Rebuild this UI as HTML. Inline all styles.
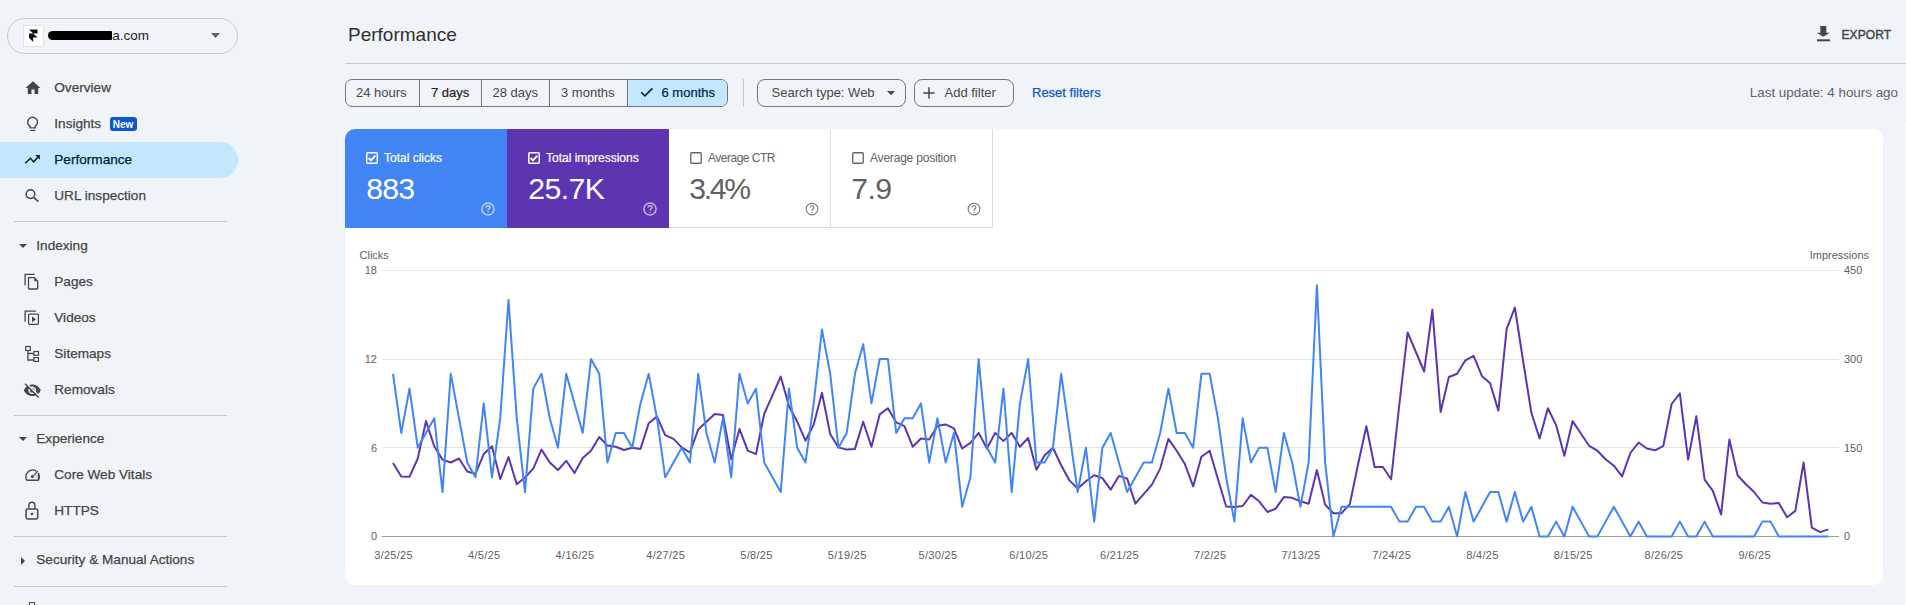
<!DOCTYPE html>
<html><head><meta charset="utf-8"><title>Performance</title>
<style>
html,body{margin:0;padding:0;}
body{width:1906px;height:605px;overflow:hidden;position:relative;background:#f0f4f9;font-family:"Liberation Sans", sans-serif;}
.t{position:absolute;white-space:nowrap;}
</style></head><body>
<div style="position:absolute;left:7.2px;top:18px;width:228.5px;height:34px;border:1px solid #c4c7c5;border-radius:18px;"></div>
<div style="position:absolute;left:23.4px;top:25.4px;width:18.4px;height:19.6px;background:#fff;border:1px solid #e3e3e3;border-radius:1px;"></div>
<svg style="position:absolute;left:28px;top:29px" width="11" height="14" viewBox="0 0 11 14"><path d="M1 0.5H9.5V4.5H5.2L9.5 8.5H5.2V13L1 8.7V4.5H5.2Z" fill="#111"/></svg>
<div style="position:absolute;left:48px;top:31.3px;width:64px;height:8.7px;background:#000;border-radius:4.5px 1px 1px 4.5px;"></div>
<div class="t" style="left:112.3px;top:25.66px;font-size:13.5px;line-height:20px;color:#1f1f1f;">a.com</div>
<svg style="position:absolute;left:210px;top:32px" width="11" height="7" viewBox="0 0 11 7"><path d="M1 1H10L5.5 6Z" fill="#5f6368"/></svg>
<div style="position:absolute;left:0;top:142px;width:238px;height:36px;background:#c2e7ff;border-radius:0 18px 18px 0;"></div>
<div class="t" style="left:54.3px;top:77.66px;font-size:13.6px;line-height:20px;color:#444746;-webkit-text-stroke:0.25px #444746;">Overview</div>
<div class="t" style="left:54.3px;top:113.66px;font-size:13.6px;line-height:20px;color:#444746;-webkit-text-stroke:0.25px #444746;">Insights</div>
<div class="t" style="left:54.3px;top:149.66px;font-size:13.6px;line-height:20px;color:#001d35;-webkit-text-stroke:0.25px #001d35;">Performance</div>
<div class="t" style="left:54.3px;top:185.66px;font-size:13.6px;line-height:20px;color:#444746;-webkit-text-stroke:0.25px #444746;">URL inspection</div>
<div class="t" style="left:54.3px;top:271.66px;font-size:13.6px;line-height:20px;color:#444746;-webkit-text-stroke:0.25px #444746;">Pages</div>
<div class="t" style="left:54.3px;top:307.66px;font-size:13.6px;line-height:20px;color:#444746;-webkit-text-stroke:0.25px #444746;">Videos</div>
<div class="t" style="left:54.3px;top:343.66px;font-size:13.6px;line-height:20px;color:#444746;-webkit-text-stroke:0.25px #444746;">Sitemaps</div>
<div class="t" style="left:54.3px;top:379.66px;font-size:13.6px;line-height:20px;color:#444746;-webkit-text-stroke:0.25px #444746;">Removals</div>
<div class="t" style="left:54.3px;top:464.66px;font-size:13.6px;line-height:20px;color:#444746;-webkit-text-stroke:0.25px #444746;">Core Web Vitals</div>
<div class="t" style="left:54.3px;top:500.66px;font-size:13.6px;line-height:20px;color:#444746;-webkit-text-stroke:0.25px #444746;">HTTPS</div>
<div style="position:absolute;left:110px;top:117px;width:27px;height:14px;background:#0b57d0;border-radius:3px;"></div>
<div class="t" style="left:112.8px;top:114.61px;font-size:10px;line-height:20px;color:#fff;font-weight:bold;">New</div>
<div class="t" style="left:36.3px;top:235.66px;font-size:13.6px;line-height:20px;color:#444746;-webkit-text-stroke:0.25px #444746;">Indexing</div>
<div class="t" style="left:36.3px;top:428.66px;font-size:13.6px;line-height:20px;color:#444746;-webkit-text-stroke:0.25px #444746;">Experience</div>
<div class="t" style="left:36.3px;top:550.46px;font-size:13.6px;line-height:20px;color:#444746;-webkit-text-stroke:0.25px #444746;">Security &amp; Manual Actions</div>
<svg style="position:absolute;left:18px;top:243px" width="10" height="6" viewBox="0 0 10 6"><path d="M1 1H9L5 5Z" fill="#444746"/></svg>
<svg style="position:absolute;left:18px;top:436px" width="10" height="6" viewBox="0 0 10 6"><path d="M1 1H9L5 5Z" fill="#444746"/></svg>
<svg style="position:absolute;left:20px;top:556px" width="6" height="10" viewBox="0 0 6 10"><path d="M1 1V9L5 5Z" fill="#444746"/></svg>
<div style="position:absolute;left:14px;top:221px;width:213px;height:1px;background:#c7c7c7;"></div>
<div style="position:absolute;left:14px;top:415px;width:213px;height:1px;background:#c7c7c7;"></div>
<div style="position:absolute;left:14px;top:536px;width:213px;height:1px;background:#c7c7c7;"></div>
<div style="position:absolute;left:14px;top:586px;width:213px;height:1px;background:#c7c7c7;"></div>
<svg style="position:absolute;left:23.5px;top:78.5px" width="18" height="18" viewBox="0 0 24 24"><path d="M10 20v-6h4v6h5v-8h3L12 3 2 12h3v8z" fill="#444746"/></svg>
<svg style="position:absolute;left:20px;top:112px" width="26" height="24" viewBox="0 0 26 24"><path d="M10.2 15.9V14.4C8.6 13.5 7.7 12 7.7 10.2 7.7 7.5 9.9 5.3 12.6 5.3S17.5 7.5 17.5 10.2C17.5 12 16.6 13.5 15.1 14.4V15.9Z" fill="none" stroke="#444746" stroke-width="1.4"/><path d="M10.2 18.5H15.2" stroke="#444746" stroke-width="1.2"/></svg>
<svg style="position:absolute;left:20px;top:148px" width="26" height="24" viewBox="0 0 26 24"><path d="M5.2 15.3L10.5 10.3 13.5 13.8 19.3 7.9" fill="none" stroke="#1f1f1f" stroke-width="1.5"/><path d="M15.2 7.1H19.9V11.8Z" fill="#1f1f1f"/></svg>
<svg style="position:absolute;left:20px;top:184px" width="26" height="24" viewBox="0 0 26 24"><circle cx="10.5" cy="10.1" r="4.3" fill="none" stroke="#444746" stroke-width="1.5"/><path d="M13.7 13.4L18.4 17.6" stroke="#444746" stroke-width="1.6"/></svg>
<svg style="position:absolute;left:20px;top:270px" width="26" height="24" viewBox="0 0 26 24"><path d="M5.1 15.5V4.4H14.7" fill="none" stroke="#444746" stroke-width="1.3"/><path d="M8.5 7.7H14.3L17.7 11.2V18.2Q17.7 19 16.9 19H9.3Q8.5 19 8.5 18.2Z" fill="none" stroke="#444746" stroke-width="1.3"/><path d="M14.3 7.7V11.2H17.7Z" fill="#444746"/></svg>
<svg style="position:absolute;left:20px;top:306px" width="26" height="24" viewBox="0 0 26 24"><path d="M5.1 15.7V5.1H15.9" fill="none" stroke="#444746" stroke-width="1.3"/><rect x="8.6" y="8.2" width="9.8" height="10.1" rx="1" fill="none" stroke="#444746" stroke-width="1.3"/><path d="M12 10.5V16.2L16 13.3Z" fill="#444746"/></svg>
<svg style="position:absolute;left:20px;top:342px" width="26" height="24" viewBox="0 0 26 24"><rect x="5.7" y="4.5" width="4.6" height="4" fill="none" stroke="#444746" stroke-width="1.2"/><rect x="13.9" y="9.5" width="4.6" height="3.8" fill="none" stroke="#444746" stroke-width="1.2"/><rect x="13.9" y="15.6" width="4.6" height="3.8" fill="none" stroke="#444746" stroke-width="1.2"/><path d="M7.9 8.5V18H13.9M7.9 11.5H13.9" fill="none" stroke="#444746" stroke-width="1.3"/></svg>
<svg style="position:absolute;left:23.2px;top:380.9px" width="18.5" height="18.5" viewBox="0 0 24 24"><path d="M12 7c2.76 0 5 2.24 5 5 0 .65-.13 1.26-.36 1.83l2.92 2.92c1.51-1.26 2.7-2.89 3.430-4.75-1.73-4.39-6-7.5-11-7.5-1.4 0-2.740.25-3.98.7l2.16 2.16C10.74 7.13 11.35 7 12 7zM2 4.27l2.28 2.28.46.46C3.08 8.3 1.78 10.02 1 12c1.73 4.39 6 7.5 11 7.5 1.55 0 3.03-.3 4.38-.84l.42.42L19.73 22 21 20.73 3.27 3 2 4.27zM7.53 9.8l1.55 1.55c-.05.21-.08.43-.08.65 0 1.66 1.34 3 3 3 .22 0 .44-.03.65-.08l1.55 1.55c-.67.33-1.41.53-2.2.53-2.76 0-5-2.24-5-5 0-.79.2-1.53.53-2.2zm4.31-.78l3.15 3.150.02-.16c0-1.66-1.34-3-3-3l-.17.01z" fill="#444746"/></svg>
<svg style="position:absolute;left:20px;top:462px" width="26" height="24" viewBox="0 0 26 24"><path d="M6.6 18.2C6.1 17.1 5.9 16 5.9 14.8 5.9 11 9 7.9 12.6 7.9 14 7.9 15.3 8.3 16.3 9M18.3 11.2C18.9 12.3 19.3 13.5 19.3 14.8 19.3 16 19 17.1 18.5 18.2Z M6.6 18.2H18.5" fill="none" stroke="#444746" stroke-width="1.4"/><path d="M17.9 9L13.5 13.6" stroke="#444746" stroke-width="1.2"/><circle cx="12.3" cy="14.6" r="1.5" fill="#444746"/></svg>
<svg style="position:absolute;left:20px;top:498px" width="26" height="24" viewBox="0 0 26 24"><path d="M8.9 10.3V7.6C8.9 5.6 10.2 4.3 11.9 4.3S14.9 5.6 14.9 7.6V10.3" fill="none" stroke="#444746" stroke-width="1.4"/><rect x="6.1" y="10.9" width="11.6" height="10" rx="1.4" fill="none" stroke="#444746" stroke-width="1.5"/><circle cx="11.9" cy="16" r="1.3" fill="#444746"/></svg>
<div style="position:absolute;left:29px;top:602px;width:4px;height:6px;border:1.4px solid #444746;border-bottom:none;"></div>
<div class="t" style="left:54.3px;top:599.66px;font-size:13.6px;line-height:20px;color:#444746;-webkit-text-stroke:0.25px #444746;">Links</div>
<div class="t" style="left:348px;top:24.72px;font-size:19px;line-height:20px;color:#303030;">Performance</div>
<svg style="position:absolute;left:1815px;top:25px" width="16" height="18" viewBox="0 0 16 18"><path d="M5.3 1H11.3V7.8H14.8L8.3 11.8 1.8 7.8H5.3Z" fill="#444746"/><rect x="2" y="14.3" width="13" height="2" fill="#444746"/></svg>
<div class="t" style="left:1841.5px;top:24.64px;font-size:12px;line-height:20px;color:#444746;-webkit-text-stroke:0.45px #444746;letter-spacing:0.1px;">EXPORT</div>
<div style="position:absolute;left:345px;top:63px;width:1561px;height:1px;background:#c7c7c7;"></div>
<div style="position:absolute;left:345px;top:79px;width:381px;height:26px;border:1px solid #747775;border-radius:7px;overflow:hidden;"><div style="position:absolute;left:282px;top:0;width:100px;height:26px;background:#c2e7ff;"></div><div style="position:absolute;left:73px;top:0;width:1px;height:26px;background:#747775;"></div><div style="position:absolute;left:135px;top:0;width:1px;height:26px;background:#747775;"></div><div style="position:absolute;left:203px;top:0;width:1px;height:26px;background:#747775;"></div><div style="position:absolute;left:281px;top:0;width:1px;height:26px;background:#747775;"></div></div>
<div class="t" style="left:356px;top:82.95px;font-size:13px;line-height:20px;color:#444746;">24 hours</div>
<div class="t" style="left:431px;top:82.95px;font-size:13px;line-height:20px;color:#1f1f1f;-webkit-text-stroke:0.2px #1f1f1f;">7 days</div>
<div class="t" style="left:492.5px;top:82.95px;font-size:13px;line-height:20px;color:#444746;">28 days</div>
<div class="t" style="left:561px;top:82.95px;font-size:13px;line-height:20px;color:#444746;">3 months</div>
<div class="t" style="left:661.5px;top:82.95px;font-size:13px;line-height:20px;color:#041e49;-webkit-text-stroke:0.2px #041e49;">6 months</div>
<svg style="position:absolute;left:639px;top:85px" width="16" height="14" viewBox="0 0 16 14"><path d="M2.2 7.2L5.9 10.8 13.4 3.4" fill="none" stroke="#041e49" stroke-width="1.6"/></svg>
<div style="position:absolute;left:743px;top:79px;width:1px;height:28px;background:#c7c7c7;"></div>
<div style="position:absolute;left:757px;top:79px;width:147px;height:26px;border:1px solid #747775;border-radius:8px;"></div>
<div class="t" style="left:771.5px;top:82.95px;font-size:13px;line-height:20px;color:#444746;">Search type: Web</div>
<svg style="position:absolute;left:886px;top:90px" width="10" height="6" viewBox="0 0 10 6"><path d="M1 1H9L5 5.2Z" fill="#444746"/></svg>
<div style="position:absolute;left:914px;top:79px;width:98px;height:26px;border:1px solid #747775;border-radius:8px;"></div>
<svg style="position:absolute;left:922px;top:86px" width="14" height="14" viewBox="0 0 14 14"><path d="M7 1.3V12.6M1.3 7H12.7" stroke="#444746" stroke-width="1.5"/></svg>
<div class="t" style="left:944.5px;top:82.95px;font-size:13px;line-height:20px;color:#444746;">Add filter</div>
<div class="t" style="left:1032px;top:82.95px;font-size:13px;line-height:20px;color:#0b57d0;-webkit-text-stroke:0.25px #0b57d0;">Reset filters</div>
<div class="t" style="right:8px;top:83.05px;font-size:13.4px;line-height:20px;color:#5f6368;">Last update: 4 hours ago</div>
<div style="position:absolute;left:345px;top:129px;width:1538px;height:456px;background:#fff;border-radius:10px;"></div>
<div style="position:absolute;left:345px;top:129px;width:162px;height:99px;background:#4285f4;border-top-left-radius:10px;"></div>
<div style="position:absolute;left:507px;top:129px;width:162px;height:99px;background:#5e35b1;"></div>
<div style="position:absolute;left:669px;top:227px;width:324px;height:1px;background:#dadce0;"></div>
<div style="position:absolute;left:830px;top:129px;width:1px;height:99px;background:#dadce0;"></div>
<div style="position:absolute;left:992px;top:129px;width:1px;height:99px;background:#dadce0;"></div>
<svg style="position:absolute;left:366px;top:152px" width="12" height="12" viewBox="0 0 12 12"><rect x="0.75" y="0.75" width="10.5" height="10.5" rx="1" fill="none" stroke="#fff" stroke-width="1.5"/><path d="M2.6 6.0L4.9 8.3 9.4 3.6" fill="none" stroke="#fff" stroke-width="1.9"/></svg>
<svg style="position:absolute;left:528px;top:152px" width="12" height="12" viewBox="0 0 12 12"><rect x="0.75" y="0.75" width="10.5" height="10.5" rx="1" fill="none" stroke="#fff" stroke-width="1.5"/><path d="M2.6 6.0L4.9 8.3 9.4 3.6" fill="none" stroke="#fff" stroke-width="1.9"/></svg>
<svg style="position:absolute;left:690px;top:152px" width="12" height="12" viewBox="0 0 12 12"><rect x="0.75" y="0.75" width="10.5" height="10.5" rx="1" fill="none" stroke="#5f6368" stroke-width="1.3"/></svg>
<svg style="position:absolute;left:852px;top:152px" width="12" height="12" viewBox="0 0 12 12"><rect x="0.75" y="0.75" width="10.5" height="10.5" rx="1" fill="none" stroke="#5f6368" stroke-width="1.3"/></svg>
<div class="t" style="left:384px;top:147.64px;font-size:12px;line-height:20px;color:#fff;-webkit-text-stroke:0.2px #fff;">Total clicks</div>
<div class="t" style="left:546px;top:147.64px;font-size:12px;line-height:20px;color:#fff;-webkit-text-stroke:0.2px #fff;">Total impressions</div>
<div class="t" style="left:708px;top:147.64px;font-size:12px;line-height:20px;color:#5f6368;letter-spacing:-0.5px;">Average CTR</div>
<div class="t" style="left:870px;top:147.64px;font-size:12px;line-height:20px;color:#5f6368;letter-spacing:-0.2px;">Average position</div>
<div class="t" style="left:366.3px;top:178.85px;font-size:30.2px;line-height:20px;color:#fff;letter-spacing:-0.8px;">883</div>
<div class="t" style="left:528.3px;top:178.85px;font-size:30.2px;line-height:20px;color:#fff;letter-spacing:-0.6px;">25.7K</div>
<div class="t" style="left:689.3px;top:178.85px;font-size:30.2px;line-height:20px;color:#616161;letter-spacing:-2.3px;">3.4%</div>
<div class="t" style="left:851.3px;top:178.85px;font-size:30.2px;line-height:20px;color:#616161;letter-spacing:-0.6px;">7.9</div>
<svg style="position:absolute;left:480px;top:200.8px;opacity:0.62" width="16" height="16" viewBox="0 0 16 16"><circle cx="8" cy="8" r="6.1" fill="none" stroke="#fff" stroke-width="1.5"/><path d="M6.05 6.5C6.05 5.4 6.9 4.7 8 4.7S9.95 5.4 9.95 6.4C9.95 7.7 8.1 7.8 8.1 9.4" fill="none" stroke="#fff" stroke-width="1.5"/><circle cx="8.1" cy="11.2" r="0.7" fill="#fff"/></svg>
<svg style="position:absolute;left:642px;top:200.8px;opacity:0.62" width="16" height="16" viewBox="0 0 16 16"><circle cx="8" cy="8" r="6.1" fill="none" stroke="#fff" stroke-width="1.5"/><path d="M6.05 6.5C6.05 5.4 6.9 4.7 8 4.7S9.95 5.4 9.95 6.4C9.95 7.7 8.1 7.8 8.1 9.4" fill="none" stroke="#fff" stroke-width="1.5"/><circle cx="8.1" cy="11.2" r="0.7" fill="#fff"/></svg>
<svg style="position:absolute;left:803.8px;top:200.8px;opacity:0.9" width="16" height="16" viewBox="0 0 16 16"><circle cx="8" cy="8" r="5.85" fill="none" stroke="#5f6368" stroke-width="1.05"/><path d="M6.05 6.5C6.05 5.4 6.9 4.7 8 4.7S9.95 5.4 9.95 6.4C9.95 7.7 8.1 7.8 8.1 9.4" fill="none" stroke="#5f6368" stroke-width="1.05"/><circle cx="8.1" cy="11.2" r="0.7" fill="#5f6368"/></svg>
<svg style="position:absolute;left:965.9px;top:200.8px;opacity:0.9" width="16" height="16" viewBox="0 0 16 16"><circle cx="8" cy="8" r="5.85" fill="none" stroke="#5f6368" stroke-width="1.05"/><path d="M6.05 6.5C6.05 5.4 6.9 4.7 8 4.7S9.95 5.4 9.95 6.4C9.95 7.7 8.1 7.8 8.1 9.4" fill="none" stroke="#5f6368" stroke-width="1.05"/><circle cx="8.1" cy="11.2" r="0.7" fill="#5f6368"/></svg>
<div style="position:absolute;left:1905px;top:122px;width:1px;height:483px;background:#f7f9fc;"></div>
<svg style="position:absolute;left:0;top:0" width="1906" height="605" viewBox="0 0 1906 605"><path d="M382 270.5H1839" stroke="#e5e5e5" stroke-width="1"/><path d="M382 359.5H1839" stroke="#e5e5e5" stroke-width="1"/><path d="M382 447.5H1839" stroke="#e5e5e5" stroke-width="1"/><path d="M382 536.5H1839" stroke="#9e9e9e" stroke-width="1"/><polyline points="393.00,463.00 401.25,476.40 409.50,476.80 417.75,458.50 426.00,421.10 434.25,446.30 442.49,459.60 450.74,462.50 458.99,458.50 467.24,471.50 475.49,473.70 483.74,454.10 491.99,446.30 500.24,479.00 508.49,457.00 516.74,484.20 524.98,477.50 533.23,468.60 541.48,449.60 549.73,462.50 557.98,470.10 566.23,460.80 574.48,473.00 582.73,458.10 590.98,450.70 599.23,437.00 607.47,445.60 615.72,446.70 623.97,450.00 632.22,447.80 640.47,448.90 648.72,423.30 656.97,416.60 665.22,435.10 673.47,438.90 681.72,447.40 689.96,452.50 698.21,429.50 706.46,421.70 714.71,413.90 722.96,415.00 731.21,459.20 739.46,428.90 747.71,450.70 755.96,454.10 764.21,413.90 772.45,395.30 780.70,376.60 788.95,406.00 797.20,421.70 805.45,440.70 813.70,424.60 821.95,392.70 830.20,434.00 838.45,447.40 846.70,449.60 854.94,448.90 863.19,421.70 871.44,446.70 879.69,414.40 887.94,408.30 896.19,422.40 904.44,426.20 912.69,446.70 920.94,438.50 929.19,439.60 937.43,425.70 945.68,424.40 953.93,428.40 962.18,448.50 970.43,442.90 978.68,432.90 986.93,448.50 995.18,432.90 1003.43,441.10 1011.68,432.90 1019.92,446.70 1028.17,438.00 1036.42,469.70 1044.67,455.20 1052.92,447.80 1061.17,465.20 1069.42,480.40 1077.67,488.60 1085.92,481.30 1094.16,475.20 1102.41,478.10 1110.66,489.70 1118.91,475.90 1127.16,478.60 1135.41,503.60 1143.66,494.20 1151.91,484.60 1160.16,468.60 1168.41,438.90 1176.66,450.70 1184.90,464.10 1193.15,486.40 1201.40,456.70 1209.65,450.70 1217.90,479.00 1226.15,506.50 1234.40,506.90 1242.65,506.00 1250.90,494.90 1259.14,501.30 1267.39,512.00 1275.64,508.70 1283.89,497.10 1292.14,497.80 1300.39,501.30 1308.64,503.80 1316.89,470.10 1325.14,504.70 1333.39,513.20 1341.64,513.20 1349.88,503.80 1358.13,464.00 1366.38,426.20 1374.63,467.00 1382.88,467.00 1391.13,479.30 1399.38,404.00 1407.63,332.40 1415.88,352.00 1424.12,371.50 1432.37,309.70 1440.62,412.10 1448.87,377.00 1457.12,373.70 1465.37,360.30 1473.62,355.90 1481.87,375.90 1490.12,383.30 1498.37,410.60 1506.62,329.10 1514.86,307.50 1523.11,361.00 1531.36,412.80 1539.61,438.50 1547.86,408.30 1556.11,425.10 1564.36,455.80 1572.61,421.10 1580.86,433.50 1589.11,445.80 1597.35,450.70 1605.60,459.20 1613.85,465.70 1622.10,476.40 1630.35,453.00 1638.60,442.50 1646.85,448.50 1655.10,450.30 1663.35,445.80 1671.60,404.00 1679.84,393.30 1688.09,459.60 1696.34,416.20 1704.59,479.70 1712.84,490.90 1721.09,514.30 1729.34,439.60 1737.59,475.20 1745.84,484.20 1754.09,492.00 1762.33,502.50 1770.58,503.80 1778.83,503.10 1787.08,517.20 1795.33,510.90 1803.58,462.50 1811.83,527.70 1820.08,532.10 1828.33,529.40" fill="none" stroke="#5e35b1" stroke-width="2" stroke-linejoin="round"/><polyline points="393.00,373.84 401.25,432.96 409.50,388.62 417.75,447.73 426.00,432.96 434.25,418.18 442.49,492.07 450.74,373.84 458.99,418.18 467.24,462.51 475.49,477.29 483.74,403.40 491.99,477.29 500.24,418.18 508.49,299.96 516.74,418.18 524.98,492.07 533.23,388.62 541.48,373.84 549.73,418.18 557.98,447.73 566.23,373.84 574.48,403.40 582.73,432.96 590.98,359.07 599.23,373.84 607.47,462.51 615.72,432.96 623.97,432.96 632.22,447.73 640.47,403.40 648.72,373.84 656.97,418.18 665.22,477.29 673.47,462.51 681.72,447.73 689.96,462.51 698.21,373.84 706.46,432.96 714.71,462.51 722.96,418.18 731.21,477.29 739.46,373.84 747.71,403.40 755.96,388.62 764.21,462.51 772.45,477.29 780.70,492.07 788.95,388.62 797.20,447.73 805.45,462.51 813.70,403.40 821.95,329.51 830.20,373.84 838.45,447.73 846.70,432.96 854.94,373.84 863.19,344.29 871.44,403.40 879.69,359.07 887.94,359.07 896.19,432.96 904.44,418.18 912.69,418.18 920.94,403.40 929.19,462.51 937.43,418.18 945.68,462.51 953.93,432.96 962.18,506.84 970.43,477.29 978.68,359.07 986.93,447.73 995.18,462.51 1003.43,388.62 1011.68,492.07 1019.92,403.40 1028.17,359.07 1036.42,462.51 1044.67,462.51 1052.92,447.73 1061.17,373.84 1069.42,432.96 1077.67,492.07 1085.92,447.73 1094.16,521.62 1102.41,447.73 1110.66,432.96 1118.91,462.51 1127.16,492.07 1135.41,477.29 1143.66,462.51 1151.91,462.51 1160.16,432.96 1168.41,388.62 1176.66,432.96 1184.90,432.96 1193.15,447.73 1201.40,373.84 1209.65,373.84 1217.90,418.18 1226.15,477.29 1234.40,521.62 1242.65,418.18 1250.90,462.51 1259.14,447.73 1267.39,447.73 1275.64,492.07 1283.89,432.96 1292.14,462.51 1300.39,506.84 1308.64,462.51 1316.89,285.18 1325.14,462.51 1333.39,536.40 1341.64,506.84 1349.88,506.84 1358.13,506.84 1366.38,506.84 1374.63,506.84 1382.88,506.84 1391.13,506.84 1399.38,521.62 1407.63,521.62 1415.88,506.84 1424.12,506.84 1432.37,521.62 1440.62,521.62 1448.87,506.84 1457.12,536.40 1465.37,492.07 1473.62,521.62 1481.87,506.84 1490.12,492.07 1498.37,492.07 1506.62,521.62 1514.86,492.07 1523.11,521.62 1531.36,506.84 1539.61,536.40 1547.86,536.40 1556.11,521.62 1564.36,536.40 1572.61,506.84 1580.86,521.62 1589.11,536.40 1597.35,536.40 1605.60,521.62 1613.85,506.84 1622.10,521.62 1630.35,536.40 1638.60,521.62 1646.85,536.40 1655.10,536.40 1663.35,536.40 1671.60,536.40 1679.84,521.62 1688.09,536.40 1696.34,536.40 1704.59,521.62 1712.84,536.40 1721.09,536.40 1729.34,536.40 1737.59,536.40 1745.84,536.40 1754.09,536.40 1762.33,521.62 1770.58,521.62 1778.83,536.40 1787.08,536.40 1795.33,536.40 1803.58,536.40 1811.83,536.40 1820.08,536.40 1828.33,536.40" fill="none" stroke="#4285f4" stroke-width="2" stroke-linejoin="round"/></svg>
<div class="t" style="left:359.5px;top:244.93px;font-size:11px;line-height:20px;color:#616161;">Clicks</div>
<div class="t" style="right:37px;top:244.93px;font-size:11px;line-height:20px;color:#616161;">Impressions</div>
<div class="t" style="right:1529px;top:260.13px;font-size:11px;line-height:20px;color:#616161;">18</div>
<div class="t" style="right:1529px;top:349.13px;font-size:11px;line-height:20px;color:#616161;">12</div>
<div class="t" style="right:1529px;top:437.63px;font-size:11px;line-height:20px;color:#616161;">6</div>
<div class="t" style="right:1529px;top:526.33px;font-size:11px;line-height:20px;color:#616161;">0</div>
<div class="t" style="left:1844px;top:260.13px;font-size:11px;line-height:20px;color:#616161;">450</div>
<div class="t" style="left:1844px;top:349.13px;font-size:11px;line-height:20px;color:#616161;">300</div>
<div class="t" style="left:1844px;top:437.63px;font-size:11px;line-height:20px;color:#616161;">150</div>
<div class="t" style="left:1844px;top:526.33px;font-size:11px;line-height:20px;color:#616161;">0</div>
<div class="t" style="left:293.4px;width:200px;text-align:center;top:545.23px;font-size:11px;line-height:20px;color:#616161;letter-spacing:0.3px;text-indent:0.3px;">3/25/25</div>
<div class="t" style="left:384.14px;width:200px;text-align:center;top:545.23px;font-size:11px;line-height:20px;color:#616161;letter-spacing:0.3px;text-indent:0.3px;">4/5/25</div>
<div class="t" style="left:474.88px;width:200px;text-align:center;top:545.23px;font-size:11px;line-height:20px;color:#616161;letter-spacing:0.3px;text-indent:0.3px;">4/16/25</div>
<div class="t" style="left:565.6199999999999px;width:200px;text-align:center;top:545.23px;font-size:11px;line-height:20px;color:#616161;letter-spacing:0.3px;text-indent:0.3px;">4/27/25</div>
<div class="t" style="left:656.3599999999999px;width:200px;text-align:center;top:545.23px;font-size:11px;line-height:20px;color:#616161;letter-spacing:0.3px;text-indent:0.3px;">5/8/25</div>
<div class="t" style="left:747.0999999999999px;width:200px;text-align:center;top:545.23px;font-size:11px;line-height:20px;color:#616161;letter-spacing:0.3px;text-indent:0.3px;">5/19/25</div>
<div class="t" style="left:837.8399999999999px;width:200px;text-align:center;top:545.23px;font-size:11px;line-height:20px;color:#616161;letter-spacing:0.3px;text-indent:0.3px;">5/30/25</div>
<div class="t" style="left:928.5799999999999px;width:200px;text-align:center;top:545.23px;font-size:11px;line-height:20px;color:#616161;letter-spacing:0.3px;text-indent:0.3px;">6/10/25</div>
<div class="t" style="left:1019.3199999999999px;width:200px;text-align:center;top:545.23px;font-size:11px;line-height:20px;color:#616161;letter-spacing:0.3px;text-indent:0.3px;">6/21/25</div>
<div class="t" style="left:1110.06px;width:200px;text-align:center;top:545.23px;font-size:11px;line-height:20px;color:#616161;letter-spacing:0.3px;text-indent:0.3px;">7/2/25</div>
<div class="t" style="left:1200.8px;width:200px;text-align:center;top:545.23px;font-size:11px;line-height:20px;color:#616161;letter-spacing:0.3px;text-indent:0.3px;">7/13/25</div>
<div class="t" style="left:1291.54px;width:200px;text-align:center;top:545.23px;font-size:11px;line-height:20px;color:#616161;letter-spacing:0.3px;text-indent:0.3px;">7/24/25</div>
<div class="t" style="left:1382.2799999999997px;width:200px;text-align:center;top:545.23px;font-size:11px;line-height:20px;color:#616161;letter-spacing:0.3px;text-indent:0.3px;">8/4/25</div>
<div class="t" style="left:1473.02px;width:200px;text-align:center;top:545.23px;font-size:11px;line-height:20px;color:#616161;letter-spacing:0.3px;text-indent:0.3px;">8/15/25</div>
<div class="t" style="left:1563.7599999999998px;width:200px;text-align:center;top:545.23px;font-size:11px;line-height:20px;color:#616161;letter-spacing:0.3px;text-indent:0.3px;">8/26/25</div>
<div class="t" style="left:1654.5px;width:200px;text-align:center;top:545.23px;font-size:11px;line-height:20px;color:#616161;letter-spacing:0.3px;text-indent:0.3px;">9/6/25</div>
</body></html>
